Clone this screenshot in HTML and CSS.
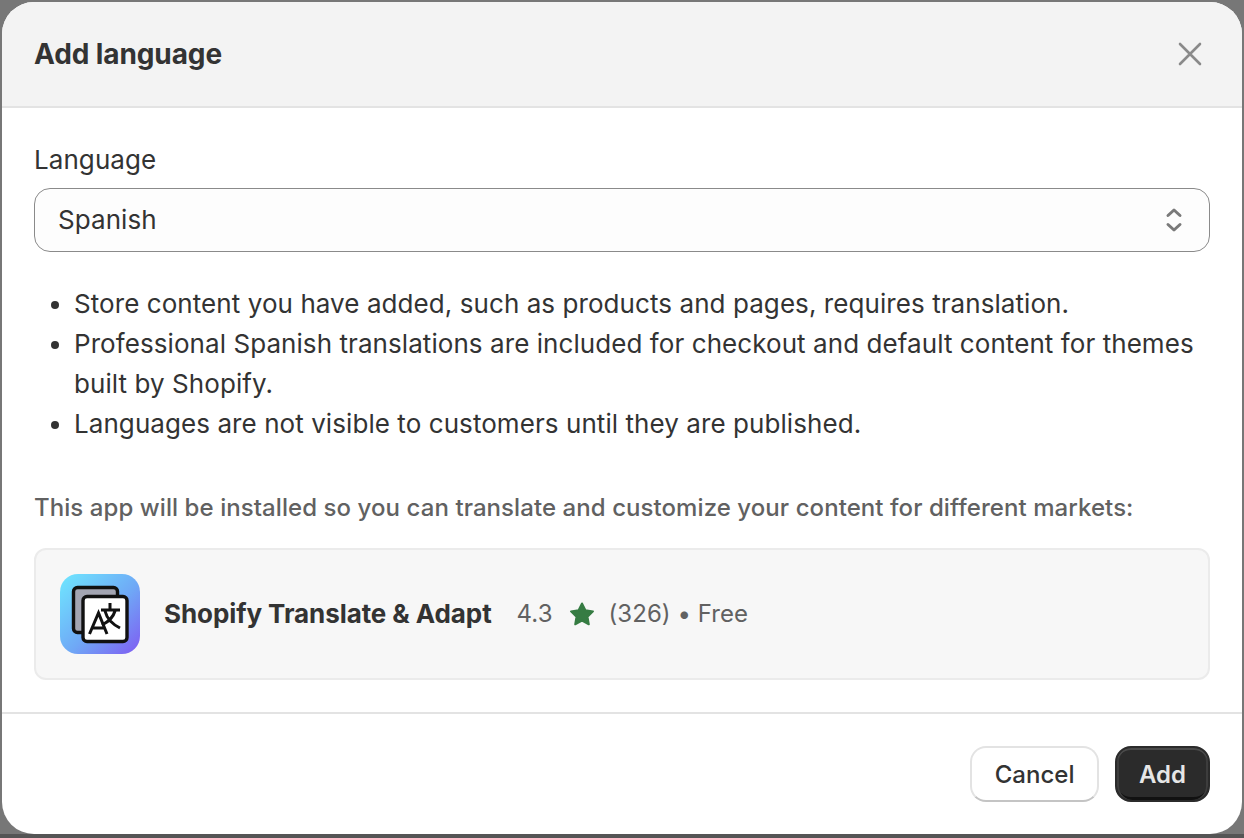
FILE: index.html
```html
<!DOCTYPE html>
<html>
  <head>
    <title>Add language</title>
    <link rel="stylesheet" href="styles.css">
  </head>
  <body>
    <div class="modal">
      <div class="header">
        <h2>Add language</h2>
        <button class="close" aria-label="Close">
          <svg width="24" height="24" viewBox="0 0 24 24"><path d="M2 2 22 22M22 2 2 22" fill="none" stroke="#8a8a8a" stroke-width="2.6" stroke-linecap="round"/></svg>
        </button>
      </div>
      <div class="content">
        <label>Language</label>
        <div class="select">
          <span>Spanish</span>
          <svg width="18" height="26" viewBox="0 0 18 26"><path d="M3 8.500 9 3l6 5.500M3 17.500 9 23l6-5.500" fill="none" stroke="#7a7a7a" stroke-width="3" stroke-linecap="round" stroke-linejoin="round"/></svg>
        </div>
        <ul>
          <li>Store content you have added, such as products and pages, requires translation.</li>
          <li>Professional Spanish translations are included for checkout and default content for themes built by Shopify.</li>
          <li>Languages are not visible to customers until they are published.</li>
        </ul>
        <p class="note">This app will be installed so you can translate and customize your content for different markets:</p>
        <div class="app">
          <div class="appIcon">
            <svg width="80" height="80" viewBox="0 0 80 80">
              <rect x="13.500" y="13.500" width="44" height="45" rx="4" fill="#a3a5b2" stroke="#111" stroke-width="3.400"/>
              <rect x="23" y="22.500" width="44" height="45" rx="4" fill="#fff" stroke="#111" stroke-width="3.400"/>
              <path d="M29.500 60 38.500 39 47 60M33 54H44" fill="none" stroke="#111" stroke-width="3"/>
              <path d="M41 36H60M50 29V36M45 37C47 45 52 50 60 54M55 37C53 44 48 48 42 51" fill="none" stroke="#111" stroke-width="3"/>
            </svg>
          </div>
          <strong>Shopify Translate &amp; Adapt</strong>
          <span class="rating">4.3</span>
          <svg class="star" width="26" height="24" viewBox="0 0 26 24"><path d="M13 1.500 16.400 8.300 24 9.400 18.500 14.700 19.800 22.300 13 18.700 6.200 22.300 7.500 14.700 2 9.400 9.600 8.300Z" fill="#367c43" stroke="#367c43" stroke-width="2" stroke-linejoin="round"/></svg>
          <span class="rating">(326) • Free</span>
        </div>
      </div>
      <div class="footer">
        <button class="btn">Cancel</button>
        <button class="btn primary">Add</button>
      </div>
    </div>
  </body>
</html>
```

FILE: styles.css
```css
html, body{
  margin: 0;
  height: 100%;
}
body{
  background-color: #777;
  background-image: linear-gradient(#777 834px, #555 834px);
  padding: 2px;
  box-sizing: border-box;
  overflow: hidden;
  font-family: Inter, sans-serif;
  color: #333;
}
.modal{
  height: 832px;
  background-color: #fff;
  border-radius: 32px;
  display: flex;
  flex-direction: column;
  overflow: hidden;
}
.header{
  height: 104px;
  flex: none;
  display: flex;
  align-items: center;
  justify-content: space-between;
  padding: 0 40px 0 32px;
  background-color: #f3f3f3;
  border-bottom: 2px solid #e3e3e3;
}
h2{
  margin: 0;
  font-size: 28px;
  font-weight: 650;
  line-height: 40px;
  letter-spacing: -0.1px;
}
.close{
  border: none;
  background: none;
  padding: 0;
  display: flex;
}
.content{
  flex: 1;
  padding: 32px 32px 0;
  font-size: 26px;
  line-height: 40px;
  letter-spacing: 0.07px;
}
label{
  display: block;
  margin-bottom: 8px;
  line-height: 40px;
}
.select{
  height: 64px;
  box-sizing: border-box;
  border: 1.500px solid #8a8a8a;
  border-radius: 16px;
  background-color: #fdfdfd;
  display: flex;
  align-items: center;
  justify-content: space-between;
  padding: 0 26px 0 23px;
}
ul{
  margin: 32px 0 0;
  padding: 0 0 0 40px;
}
.note{
  margin: 44px 0 0;
  color: #616161;
  font-weight: 500;
  font-size: 24px;
  line-height: 40px;
}
.app{
  margin-top: 20px;
  height: 132px;
  box-sizing: border-box;
  background-color: #f7f7f7;
  border: 2px solid #ebebeb;
  border-radius: 12px;
  display: flex;
  align-items: center;
  padding-left: 24px;
  letter-spacing: 0;
}
.appIcon{
  width: 80px;
  height: 80px;
  border-radius: 18px;
  background: linear-gradient(135deg, #6fe8ff, #6fa8f6 55%, #7f5bf2);
  margin-right: 24px;
}
.appIcon svg{
  display: block;
}
.app strong{
  font-weight: 650;
  margin-right: 25px;
  letter-spacing: -0.08px;
}
.rating{
  color: #616161;
  font-size: 24px;
  letter-spacing: 0.05px;
}
.star{
  margin: 0 14px 0 16px;
}
.footer{
  height: 122px;
  flex: none;
  box-sizing: border-box;
  border-top: 2px solid #e3e3e3;
  display: flex;
  align-items: center;
  justify-content: flex-end;
  gap: 16px;
  padding: 0 32px 0 0;
}
.btn{
  height: 56px;
  padding: 0 22.500px;
  border-radius: 16px;
  border: 2px solid #e3e3e3;
  border-bottom-color: #c4c4c4;
  background-color: #fff;
  color: #333;
  font-family: Inter, sans-serif;
  font-size: 24px;
  font-weight: 550;
}
.primary{
  padding: 0 22px;
  background-color: #2b2b2b;
  color: #e6e6e6;
  border: 2px solid #2b2b2b;
  box-shadow: inset 0 2px 0 #4a4a4a, inset 2px 0 0 #3d3d3d, inset -2px 0 0 #3d3d3d, inset 0 -3px 0 #111;
  font-weight: 600;
}
```
